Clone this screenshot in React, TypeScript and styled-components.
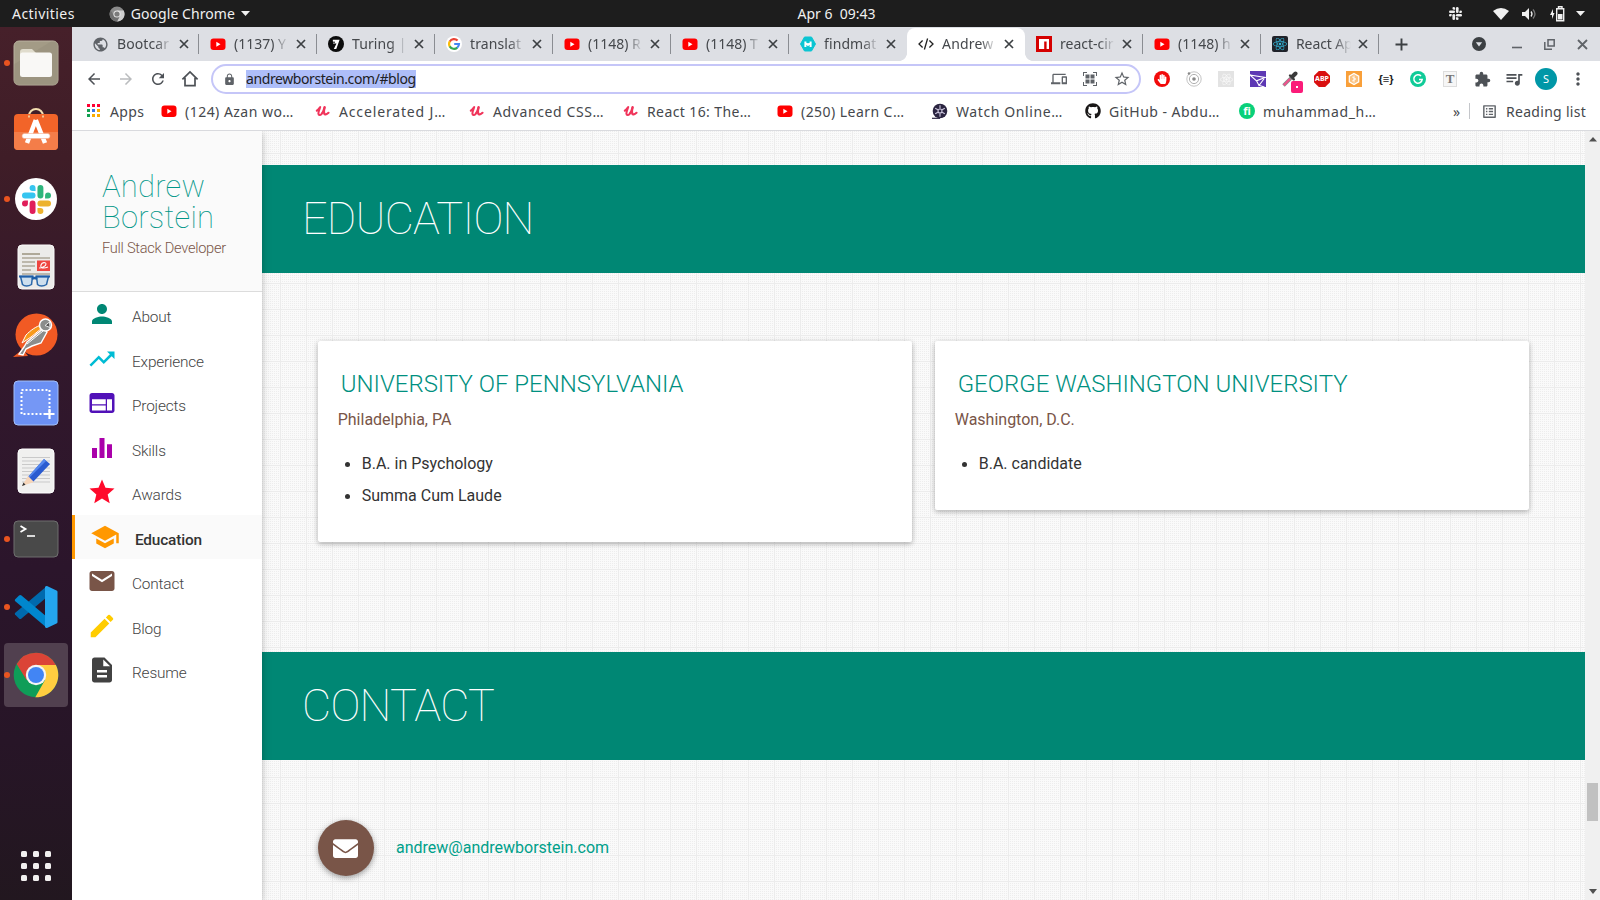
import React from 'react';
import styled, { createGlobalStyle, css } from 'styled-components';
import {
  MdPerson, MdTrendingUp, MdWeb, MdEqualizer, MdGrade, MdSchool, MdMail, MdEdit, MdDescription,
  MdArrowBack, MdArrowForward, MdRefresh, MdLock, MdDevices, MdStarBorder, MdExtension,
  MdQueueMusic, MdMoreVert, MdPublic, MdOutlineListAlt,
} from 'react-icons/md';
import { FaGithub, FaReact, FaEnvelope, FaHandPaper } from 'react-icons/fa';

const GlobalStyle = createGlobalStyle`
  * { box-sizing: border-box; }
  body { margin: 0; overflow: hidden; background: #fff; }
  svg { display: block; flex: none; }
`;

const uiFont = css`font-family: 'Noto Sans', 'Open Sans', sans-serif;`;
const siteFont = css`font-family: Roboto, 'Liberation Sans', sans-serif;`;

const Desktop = styled.div`
  width: 1600px;
  height: 900px;
  display: flex;
  flex-direction: column;
  overflow: hidden;
`;

/* ---------- system bar ---------- */

const SystemBar = styled.header`
  ${uiFont}
  height: 27px;
  flex: none;
  background: #1d1d1d;
  color: #f0f0f0;
  display: grid;
  grid-template-columns: 1fr auto 1fr;
  align-items: center;
  font-size: 14px;
  line-height: 27px;
  white-space: pre;
`;
const SystemLeft = styled.div`
  display: flex;
  align-items: center;
  padding-left: 12px;
`;
const SystemApp = styled.div`
  display: flex;
  align-items: center;
  margin-left: 34px;
  gap: 6px;
`;
const SystemRight = styled.div`
  display: flex;
  align-items: center;
  justify-content: flex-end;
  padding-right: 15px;
`;
const Clock = styled.div`
  padding-left: 73px;
`;
const Label = styled.span<{ $ls?: number }>`
  letter-spacing: ${(p) => p.$ls ?? 0}px;
  white-space: pre;
`;
const Spacer = styled.span<{ $w: number }>`
  width: ${(p) => p.$w}px;
  flex: none;
`;

const Main = styled.div`
  flex: 1;
  display: flex;
  min-height: 0;
`;

/* ---------- dock ---------- */

const Dock = styled.nav`
  width: 72px;
  flex: none;
  background: linear-gradient(180deg, #46202a 0%, #3f1d27 15%, #32182c 38%, #2b152b 62%, #271527 82%, #22171f 100%);
  display: flex;
  flex-direction: column;
  padding-top: 2px;
`;
const DockItem = styled.div<{ $open?: boolean; $active?: boolean }>`
  position: relative;
  height: 64px;
  width: 64px;
  margin: 2px 4px;
  flex: none;
  border-radius: 4px;
  display: flex;
  align-items: center;
  justify-content: center;
  background: ${(p) => (p.$active ? '#51404f' : 'transparent')};
  ${(p) => p.$open && css`
    &::before {
      content: '';
      position: absolute;
      left: 0;
      top: 29px;
      width: 6px;
      height: 6px;
      border-radius: 50%;
      background: #e95420;
    }
  `}
`;
const AppGrid = styled.div`
  margin: auto 0 19px 21px;
  display: grid;
  grid-template-columns: repeat(3, 6px);
  gap: 6px;
  span {
    width: 6px;
    height: 6px;
    border-radius: 1.5px;
    background: #f2f0f0;
  }
`;

/* ---------- browser ---------- */

const Browser = styled.div`
  flex: 1;
  min-width: 0;
  display: flex;
  flex-direction: column;
`;
const TabStrip = styled.div`
  ${uiFont}
  height: 34px;
  flex: none;
  background: #dddfe4;
  display: flex;
  align-items: center;
  padding-left: 9px;
  font-size: 14px;
  color: #45484c;
`;
const TabBox = styled.div<{ $active?: boolean; $sep?: boolean }>`
  position: relative;
  width: 118px;
  height: 34px;
  flex: none;
  display: flex;
  align-items: center;
  padding: 0 8px 0 11px;
  ${(p) => p.$active && css`
    margin-top: 1px;
    height: 33px;
    background: #fff;
    border-radius: 8px 8px 0 0;
    padding-bottom: 1px;
    &::before, &::after {
      content: '';
      position: absolute;
      bottom: 0;
      width: 8px;
      height: 8px;
    }
    &::before { left: -8px; background: radial-gradient(circle at 0 0, transparent 7.6px, #fff 8.2px); }
    &::after { right: -8px; background: radial-gradient(circle at 100% 0, transparent 7.6px, #fff 8.2px); }
  `}
  ${(p) => p.$sep && css`
    &::after {
      content: '';
      position: absolute;
      right: 0;
      top: 7px;
      width: 1px;
      height: 20px;
      background: #8a8d92;
    }
  `}
`;
const TabTitle = styled.div<{ $ls: number }>`
  margin-left: 8px;
  width: 55px;
  overflow: hidden;
  white-space: nowrap;
  line-height: 24px;
  letter-spacing: ${(p) => p.$ls}px;
  -webkit-mask-image: linear-gradient(90deg, #000 70%, transparent 100%);
  mask-image: linear-gradient(90deg, #000 70%, transparent 100%);
`;
const CloseGlyph = styled.svg`
  margin-left: 7px;
  color: #3c4043;
`;
const WindowButtons = styled.div`
  flex: 1;
  display: flex;
  align-items: center;
  justify-content: flex-end;
  padding-right: 12px;
`;

const Toolbar = styled.div`
  height: 36px;
  flex: none;
  background: #fff;
  display: flex;
  align-items: center;
  color: #4d5156;
  padding: 0 6px 0 13px;
`;
const NavButtons = styled.div`
  display: flex;
  align-items: center;
  gap: 14px;
  margin-right: 12px;
`;
const Omnibox = styled.div`
  ${uiFont}
  width: 930px;
  height: 30px;
  flex: none;
  border: 2px solid #c5c6f8;
  border-radius: 15px;
  display: flex;
  align-items: center;
  padding: 0 8px 0 10px;
  font-size: 14px;
  color: #202124;
`;
const Selected = styled.span`
  margin-left: 10px;
  background: #aebef9;
  line-height: 18px;
  width: 170px;
  letter-spacing: -0.41px;
  white-space: nowrap;
`;
const OmniIcons = styled.div`
  margin-left: auto;
  display: flex;
  align-items: center;
  gap: 16px;
`;
const Extensions = styled.div`
  margin-left: auto;
  display: flex;
  align-items: center;
`;
const ExtSlot = styled.div`
  position: relative;
  width: 32px;
  height: 32px;
  display: flex;
  align-items: center;
  justify-content: center;
`;
const Avatar = styled.div`
  ${uiFont}
  width: 22px;
  height: 22px;
  border-radius: 50%;
  background: #0097a7;
  color: #fff;
  font-size: 11px;
  line-height: 22px;
  text-align: center;
`;

const BookmarkBar = styled.div`
  ${uiFont}
  height: 34px;
  flex: none;
  background: #fff;
  border-bottom: 1px solid #d9dade;
  display: flex;
  align-items: center;
  padding: 0 14px 5px 15px;
  font-size: 14px;
  color: #45484c;
`;
const Bookmark = styled.div`
  width: 154px;
  flex: none;
  display: flex;
  align-items: center;
  gap: 8px;
`;
const AppsLink = styled.div`
  width: 74px;
  flex: none;
  display: flex;
  align-items: center;
  gap: 9px;
`;
const ReadingArea = styled.div`
  margin-left: auto;
  display: flex;
  align-items: center;
`;
const Divider = styled.span`
  width: 1px;
  height: 16px;
  background: #c4c6ca;
  margin: 0 11px 0 9px;
`;

/* ---------- site ---------- */

const Viewport = styled.div`
  flex: 1;
  min-height: 0;
  display: flex;
`;
const SideNav = styled.aside`
  ${siteFont}
  position: relative;
  z-index: 2;
  width: 190px;
  flex: none;
  background: #fff;
  box-shadow: 0 2px 5px rgba(0, 0, 0, 0.16), 0 2px 10px rgba(0, 0, 0, 0.12);
  clip-path: inset(0 -14px 0 0);
`;
const Brand = styled.div`
  height: 161px;
  background: #fafafa;
  border-bottom: 1px solid #dcdcdc;
  padding: 40px 0 0 30px;
`;
const BrandName = styled.div`
  font-weight: 100;
  font-size: 31px;
  line-height: 31px;
  letter-spacing: 0.25px;
  color: #009688;
`;
const BrandRole = styled.div`
  font-weight: 300;
  font-size: 14.6px;
  line-height: 20px;
  letter-spacing: -0.26px;
  margin-top: 5px;
  color: #795548;
  white-space: nowrap;
`;
const SideLink = styled.div<{ $active?: boolean; $color: string }>`
  height: 44.5px;
  display: flex;
  align-items: center;
  padding-left: 15px;
  font-size: 15.4px;
  letter-spacing: -0.18px;
  font-weight: ${(p) => (p.$active ? 500 : 300)};
  color: ${(p) => (p.$active ? '#333' : '#444')};
  background: ${(p) => (p.$active ? '#fafafa' : 'transparent')};
  border-left: ${(p) => (p.$active ? `3px solid ${p.$color}` : '0')};
  svg {
    width: 30px;
    height: 30px;
    color: ${(p) => p.$color};
  }
  span {
    margin-left: 15px;
    padding-top: 6px;
  }
`;
const Page = styled.main`
  ${siteFont}
  flex: 1;
  min-width: 0;
  padding-top: 34px;
  background-color: #fafafa;
  background-image:
    linear-gradient(90deg, #ececec 1px, transparent 1px),
    linear-gradient(180deg, #ececec 1px, transparent 1px),
    conic-gradient(from 0deg at 1px 1px, transparent 75%, #ededed 0);
  background-size: 26px 26px, 26px 26px, 2px 2px;
  background-position: 18px 22px, 18px 22px, 0 0;
`;
const Banner = styled.h2`
  margin: 0;
  height: 108px;
  padding: 27px 0 0 40px;
  background: #008774;
  color: #fff;
  font-weight: 100;
  font-size: 45px;
  line-height: 53px;
  letter-spacing: -0.78px;
`;
const CardRow = styled.div`
  height: 379px;
  padding: 68px 56px 0 56px;
  display: flex;
  align-items: flex-start;
  gap: 23px;
`;
const Card = styled.article`
  flex: 1;
  background: #fff;
  border-radius: 2px;
  box-shadow: 0 2px 5px rgba(0, 0, 0, 0.2), 0 1px 6px rgba(0, 0, 0, 0.12);
  padding: 28px 20px 30px 19.7px;
`;
const CardTitle = styled.h3`
  margin: 0 0 0 3px;
  font-weight: 300;
  font-size: 24px;
  line-height: 30px;
  color: #009080;
  white-space: nowrap;
`;
const CardPlace = styled.p`
  margin: 9px 0 0;
  font-size: 16px;
  line-height: 24px;
  color: #795548;
`;
const CardList = styled.ul`
  margin: 16px 0 0;
  padding: 0 0 0 24px;
  list-style: none;
  color: #333;
  font-size: 16px;
  line-height: 32px;
  li {
    display: flex;
    align-items: center;
  }
  li::before {
    content: '';
    width: 5px;
    height: 5px;
    margin: 0 12px 0 -17px;
    border-radius: 50%;
    background: #333;
  }
`;
const ContactRow = styled.div`
  padding: 60px 0 0 56px;
  display: flex;
  align-items: center;
  gap: 22px;
`;
const MailButton = styled.div`
  width: 56px;
  height: 56px;
  border-radius: 50%;
  background: #795548;
  color: #fff;
  display: flex;
  align-items: center;
  justify-content: center;
  padding-right: 2px;
  box-shadow: 0 2px 5px rgba(0, 0, 0, 0.26), 0 2px 8px rgba(0, 0, 0, 0.14);
`;
const MailLink = styled.a`
  color: #00a08a;
  font-size: 16px;
  padding-bottom: 2px;
`;
const ScrollTrack = styled.div`
  width: 15px;
  flex: none;
  background: #f0f0f0;
  display: flex;
  flex-direction: column;
  align-items: center;
  padding: 6px 0;
`;
const Thumb = styled.div`
  width: 11px;
  height: 38px;
  background: #c1c1c1;
  margin: 641px 0 auto;
`;

/* ---------- favicons and glyphs ---------- */

const YouTube = () => (
  <svg width="16" height="16" viewBox="0 0 16 16">
    <rect x="0.5" y="2.5" width="15" height="11.5" rx="3" fill="#f00" />
    <path d="M6.3 5.7v5l4.2-2.5z" fill="#fff" />
  </svg>
);
const Turing = () => (
  <svg width="16" height="16" viewBox="0 0 16 16">
    <circle cx="8" cy="8" r="8" fill="#0c0c0c" />
    <path d="M4.8 3.8h6.8L8.3 13H5.8l2.7-5.4H5z" fill="#fff" />
    <path d="M4 6.2h3" stroke="#0c0c0c" strokeWidth="1" />
  </svg>
);
const Google = () => (
  <svg width="16" height="16" viewBox="0 0 16 16">
    <circle cx="8" cy="8" r="8" fill="#fff" />
    <g fill="none" strokeWidth="2.1">
      <path d="M11.6 4.6A5 5 0 0 0 3.7 5.6" stroke="#ea4335" />
      <path d="M3.8 5.4a5 5 0 0 0 0 5.2" stroke="#fbbc05" />
      <path d="M3.7 10.4a5 5 0 0 0 7.6 1.2" stroke="#34a853" />
      <path d="M11.2 11.7A5 5 0 0 0 13 8H8.2" stroke="#4285f4" />
    </g>
  </svg>
);
const FindMatch = () => (
  <svg width="16" height="16" viewBox="0 0 16 16">
    <path d="M4.5 1h7L15.5 8l-4 7h-7L.5 8z" fill="#0cc5d2" stroke="#0cc5d2" strokeLinejoin="round" />
    <path d="M5.4 11V5.6M10.6 11V5.6M5.4 6.6L8 9l2.6-2.4" fill="none" stroke="#fff" strokeWidth="2" />
  </svg>
);
const Code = () => (
  <svg width="16" height="16" viewBox="0 0 16 16" fill="none" stroke="#222" strokeWidth="1.3">
    <path d="M4.6 4.5L1 8l3.6 3.5M11.4 4.5L15 8l-3.6 3.5M9.6 2.5L6.4 13.5" />
  </svg>
);
const Npm = () => (
  <svg width="16" height="16" viewBox="0 0 16 16">
    <rect width="16" height="16" fill="#d50000" />
    <path d="M3 3h10v10h-2.4V5.6H8.2V13H3z" fill="#fff" />
  </svg>
);
const ReactFav = styled.span`
  width: 16px;
  height: 16px;
  flex: none;
  border-radius: 2px;
  background: #20232a;
  color: #33b5d8;
  display: flex;
  align-items: center;
  justify-content: center;
`;
const Udemy = () => (
  <svg width="16" height="16" viewBox="0 0 16 16" fill="none" stroke="#f0355b" strokeLinecap="round" strokeLinejoin="round">
    <path d="M1.8 7.6C3 6.8 4.2 5.4 5.2 4c-1 2.7-2 5-1.8 6.7.2 1.8 2 1.6 3.1.4C7.8 9.8 8.8 7 9.6 4.2" strokeWidth="2.1" />
    <path d="M9.6 4.2C8.9 7 8.7 9 9.2 10.6c.5 1.3 2.2 1.2 4.300-.8" strokeWidth="2.2" />
  </svg>
);
const Reel = () => (
  <svg width="17" height="16" viewBox="0 0 17 16">
    <circle cx="9" cy="8" r="7.3" fill="#2a2440" />
    <g stroke="#cfc9e0" strokeWidth="1.1">
      <path d="M9 2.200v3.300M13.800 5.200l-2.700 1.500M13.800 10.800l-2.700-1.500M9 13.800v-3.300M4.200 10.800l2.700-1.500M4.200 5.200l2.700 1.500" />
      <circle cx="9" cy="8" r="2" fill="#2a2440" />
    </g>
    <path d="M1 15.3h8" stroke="#2a2440" strokeWidth="1.2" />
  </svg>
);
const FiverrBadge = styled.span`
  width: 16px;
  height: 16px;
  flex: none;
  border-radius: 50%;
  background: #09d07a;
  color: #fff;
  font-size: 11px;
  font-weight: 700;
  line-height: 15px;
  text-align: center;
`;
const AppsGlyph = () => {
  const c = ['#f03', '#f03', '#f03', '#10a050', '#3b78e7', '#f9ab00', '#10a050', '#f9ab00', '#f9ab00'];
  return (
    <svg width="14" height="14" viewBox="0 0 14 14">
      {c.map((f, i) => (
        <rect key={i} x={(i % 3) * 5} y={Math.floor(i / 3) * 5} width="3" height="3" fill={f} />
      ))}
    </svg>
  );
};
const HomeGlyph = () => (
  <svg width="18" height="18" viewBox="0 0 18 18" fill="none" stroke="currentColor" strokeWidth="1.7">
    <path d="M1.4 9.4L9 2l7.6 7.4M4 7.700v8h10v-8" />
  </svg>
);
const SlackMark = ({ size, mono }: { size: number; mono?: boolean }) => {
  const c = mono ? ['#eee', '#eee', '#eee', '#eee'] : ['#36c5f0', '#2eb67d', '#ecb22e', '#e01e5a'];
  return (
    <svg width={size} height={size} viewBox="0 0 24 24">
      {c.map((f, i) => (
        <g key={i} fill={f} transform={`rotate(${i * 90} 12 12)`}>
          <rect x="0" y="6.3" width="11.2" height="4.9" rx="2.45" />
          <path d="M11.2 2.45a2.45 2.45 0 1 0-2.45 2.45h2.45z" />
        </g>
      ))}
    </svg>
  );
};
const MonoChrome = () => (
  <svg width="16" height="16" viewBox="0 0 16 16">
    <circle cx="8" cy="8" r="7.5" fill="#8b8b8b" />
    <path d="M8 4.5h6.7A7.5 7.5 0 0 1 8 15.5l3-5.7z" fill="#cfcfcf" />
    <path d="M1.6 4.3A7.5 7.5 0 0 0 8 15.5l3-5.7-6 0z" fill="#707070" />
    <circle cx="8" cy="8" r="3.6" fill="#e8e8e8" />
    <circle cx="8" cy="8" r="2.6" fill="#7b7b7b" />
  </svg>
);
const Caret = ({ w = 9, h = 5, color = '#f0f0f0' }: { w?: number; h?: number; color?: string }) => (
  <svg width={w} height={h} viewBox="0 0 10 6" preserveAspectRatio="none"><path d="M0 0h10L5 6z" fill={color} /></svg>
);

/* ---------- dock pictures ---------- */

const FilesIcon = () => (
  <svg width="46" height="46" viewBox="0 0 46 46">
    <rect x="1" y="1" width="44" height="44" rx="5" fill="#a39b86" stroke="#b9b29f" />
    <path d="M1.5 24L38 1.5h3a4 4 0 0 1 4 4V41a4 4 0 0 1-4 4H5a4 4 0 0 1-4-4z" fill="#968e79" opacity=".5" />
    <path d="M7 12a3 3 0 0 1 3-3h9l4 4h13v8H7z" fill="#e0dccd" />
    <rect x="7" y="12.5" width="32" height="24.5" rx="2.5" fill="#f9f8f6" />
  </svg>
);
const SoftwareIcon = () => (
  <svg width="46" height="50" viewBox="0 0 46 50">
    <path d="M16 10a7 7 0 0 1 14 0" fill="none" stroke="#f3dfb0" strokeWidth="2" />
    <rect x="1" y="8" width="44" height="36" rx="4" fill="#f26429" />
    <path d="M1 26h44v14a4 4 0 0 1-4 4H5a4 4 0 0 1-4-4z" fill="#f47d49" />
    <path d="M22.8 14L14 37M22.8 14L32 37" stroke="#fff" strokeWidth="4.5" />
    <rect x="9" y="27.5" width="28" height="5" rx="2.5" fill="#fff" stroke="#f3a98a" strokeWidth=".6" />
    <path d="M16 9.5v2M30 9.5v2" stroke="#f3dfb0" strokeWidth="1.6" />
  </svg>
);
const SlackDock = styled.div`
  width: 42px;
  height: 42px;
  border-radius: 50%;
  background: #fff;
  display: flex;
  align-items: center;
  justify-content: center;
`;
const ViewerIcon = () => (
  <svg width="46" height="46" viewBox="0 0 46 46">
    <rect x="5" y="1" width="36" height="44" rx="4" fill="#ecebe9" stroke="#fafafa" />
    <path d="M9 14h28M9 18h13M9 22h13M9 26h9M9 30h28" stroke="#bdb8ac" strokeWidth="1.8" />
    <path d="M9 10h18" stroke="#a9a290" strokeWidth="1.8" />
    <rect x="24" y="16.5" width="13" height="10.5" fill="#ee4540" />
    <path d="M26 24c3 0 7-2 7-4s-4-2-5 1 2 4 7 2" fill="none" stroke="#fff" strokeWidth="1.1" />
    <path d="M7.5 32.5h12l-1 8c-3 2-7 2-9 0zM23.5 32.5h12l-2 8c-3 2-7 2-9 0z" fill="#cddfee" stroke="#2a68aa" strokeWidth="1.5" />
    <path d="M6 32.5h14.5M22.5 32.5h14.5M19 35q2.5-2 5 0" fill="none" stroke="#1f5fa8" strokeWidth="2.2" />
  </svg>
);
const PostmanIcon = () => (
  <svg width="46" height="46" viewBox="0 0 46 46">
    <path d="M0 45l10-8 5 7z" fill="#f15a24" />
    <circle cx="23.5" cy="22.5" r="21" fill="#f15a24" />
    <path d="M31 16L14 30l-3 5-5 7 4 1 3-6 6-3 9-3 6-11z" fill="#8b8d8c" stroke="#fff" strokeWidth="1.4" />
    <path d="M29 13c-6 1-12 6-16 10l-4 8 9-6 11-9z" fill="#f89a1c" stroke="#fff" strokeWidth="1" />
    <path d="M14 32l16-13" stroke="#fff" strokeWidth="1" />
    <circle cx="32.5" cy="13" r="6" fill="#8b8d8c" stroke="#fff" strokeWidth="1.5" />
    <path d="M32 13.5l4.5-3.5.5 5.5z" fill="#555" stroke="#fff" strokeWidth=".8" />
  </svg>
);
const ScreenshotIcon = () => (
  <svg width="46" height="46" viewBox="0 0 46 46">
    <rect x="1" y="1" width="44" height="44" rx="4" fill="#6b90f4" stroke="#a4c0f8" />
    <rect x="8.5" y="10" width="28" height="24" fill="#7597f5" stroke="#fff" strokeWidth="2" strokeDasharray="2 2" />
    <path d="M36.5 29v10M31.5 34h10" stroke="#fff" strokeWidth="2.2" />
  </svg>
);
const EditorIcon = () => (
  <svg width="46" height="46" viewBox="0 0 46 46">
    <rect x="5" y="1" width="36" height="44" rx="4" fill="#f0f0ef" stroke="#fff" />
    <path d="M9 9.5h28M9 13h28M9 16.5h28M9 20h28M9 23.5h28M9 27h28M9 30.5h28M9 34h28" stroke="#c9c9c9" />
    <path d="M31 11l6 5-17 18-5-5z" fill="#2a5bd0" />
    <path d="M31 11l2 2-17 17-1-1z" fill="#5487ee" />
    <path d="M15 28l6 6-12 4z" fill="#f6d5b9" />
    <path d="M10.5 34.5L9 38l3.5-1.2z" fill="#333" />
  </svg>
);
const TerminalIcon = () => (
  <svg width="46" height="46" viewBox="0 0 46 46">
    <rect x="1" y="5" width="44" height="36" rx="4" fill="#494949" stroke="#6f6f6f" />
    <path d="M7.5 10l5 3-5 3" fill="none" stroke="#fff" strokeWidth="1.8" />
    <path d="M14 20h8" stroke="#fff" strokeWidth="1.6" />
  </svg>
);
const CodeIcon = () => (
  <svg width="44" height="44" viewBox="0 0 44 44">
    <path d="M1 29.5l4 4a2 2 0 0 0 2.5 0L33 12V1L1 28a1.5 1.5 0 0 0 0 1.5z" fill="#0069ad" />
    <path d="M1 14.5l4-4a2 2 0 0 1 2.5 0L33 32v11L1 16a1.5 1.5 0 0 1 0-1.5z" fill="#0087ce" />
    <path d="M33 43V1l9.5 4.5a1.5 1.5 0 0 1 1 1.5v30a1.5 1.5 0 0 1-1 1.5z" fill="#24a6ef" />
    <path d="M33 43a2 2 0 0 1-2-1V2a2 2 0 0 1 2-1z" fill="#24a6ef" />
  </svg>
);
const ChromeIcon = () => (
  <svg width="46" height="46" viewBox="0 0 46 46">
    <circle cx="23" cy="23" r="22.3" fill="#0f9d58" />
    <path d="M23 .7a22.3 22.3 0 0 0-19.3 11.2L13.5 28 23 13h19.9A22.3 22.3 0 0 0 23 .7z" fill="#db4437" />
    <path d="M42.9 13H23l9 15-9.7 17.3A22.3 22.3 0 0 0 42.9 13z" fill="#ffcd40" />
    <circle cx="23" cy="23" r="10.2" fill="#f4f4f4" />
    <circle cx="23" cy="23" r="8" fill="#4285f4" />
  </svg>
);

/* ---------- extension pictures ---------- */

const RedDot = styled.span`
  width: 16px;
  height: 16px;
  border-radius: 50%;
  background: #f20a0a;
  color: #fff;
  display: flex;
  align-items: center;
  justify-content: center;
`;
const AbpBadge = styled.span`
  ${uiFont}
  width: 16px;
  height: 16px;
  background: #d90f0f;
  clip-path: polygon(30% 0, 70% 0, 100% 30%, 100% 70%, 70% 100%, 30% 100%, 0 70%, 0 30%);
  color: #fff;
  font-size: 7px;
  font-weight: 700;
  line-height: 16px;
  text-align: center;
`;
const PaleReact = styled.span`
  width: 16px;
  height: 16px;
  background: #e3e3e3;
  color: #fafafa;
  display: flex;
  align-items: center;
  justify-content: center;
`;
const Braces = styled.span`
  font: 700 11px 'Liberation Sans', sans-serif;
  color: #222;
`;
const TypeBox = styled.span`
  width: 14px;
  height: 16px;
  border: 1px solid #ddd;
  background: #f6f6f6;
  font: 700 13px/14px 'Liberation Serif', serif;
  text-align: center;
  color: #777;
`;
const PickerBadge = styled.span`
  position: absolute;
  left: 17px;
  top: 18px;
  width: 12px;
  height: 12px;
  border-radius: 2px;
  background: #fb1b79;
  &::after {
    content: '';
    position: absolute;
    left: 5px;
    top: 5px;
    width: 2px;
    height: 2px;
    background: #fff;
  }
`;
const Orbit = () => (
  <svg width="16" height="16" viewBox="0 0 16 16" fill="none" stroke="#c4c4c4">
    <circle cx="8" cy="8" r="7.2" /><circle cx="8" cy="8" r="4.6" stroke="#b0b0b0" />
    <circle cx="8" cy="8" r="1.8" fill="#888" stroke="none" /><circle cx="3" cy="2.5" r="1.3" fill="#888" stroke="none" />
  </svg>
);
const Arrowed = () => (
  <svg width="16" height="16" viewBox="0 0 16 16">
    <rect width="16" height="16" fill="#5d38b4" />
    <path d="M0 4l15 2.5-8.5 3.3zM6.5 9.8L9 14.5l6-8M9.5 14.5l5 1.5" fill="none" stroke="#fff" strokeWidth="1.1" />
  </svg>
);
const Picker = () => (
  <svg width="16" height="16" viewBox="0 0 16 16">
    <path d="M1.5 14.5L9 7" stroke="#8a8a8a" strokeWidth="3.6" />
    <path d="M1.8 14.2L8 8" stroke="#f2508c" strokeWidth="2" />
    <path d="M8 4.5l3.8 3.8" stroke="#3a3a3a" strokeWidth="2.4" strokeLinecap="round" />
    <path d="M10.5 5.5L13.5 2.5" stroke="#3a3a3a" strokeWidth="4" strokeLinecap="round" />
  </svg>
);
const HexBox = () => (
  <svg width="16" height="16" viewBox="0 0 16 16">
    <rect width="16" height="16" fill="#f9a03a" />
    <path d="M8 2.5l4.700 2.700v5.600L8 13.500l-4.700-2.700V5.200z" fill="#fbc27f" stroke="#fff" strokeWidth="1.200" />
    <path d="M8 4.500v7M6.200 6l3.600 2-3.600 2" stroke="#fff" fill="none" strokeWidth=".9" />
  </svg>
);
const Grammarly = () => (
  <svg width="16" height="16" viewBox="0 0 16 16">
    <circle cx="8" cy="8" r="8" fill="#10cb98" />
    <path d="M11 5a4.2 4.2 0 1 0 1.2 3.4H9" fill="none" stroke="#fff" strokeWidth="1.5" />
  </svg>
);
const Scanner = () => (
  <svg width="14" height="14" viewBox="0 0 14 14" fill="#5f6368">
    <path d="M0 4V0h4v1H1v3zM10 0h4v4h-1V1h-3zM0 10h1v3h3v1H0zM13 10h1v4h-4v-1h3z" />
    <rect x="2.5" y="2.5" width="4" height="4" /><rect x="7.5" y="2.5" width="4" height="4" />
    <rect x="2.5" y="7.5" width="4" height="4" /><rect x="7.5" y="7.5" width="4" height="4" />
  </svg>
);

const tabs: { icon: React.ReactNode; title: string; active?: boolean; ls?: number }[] = [
  { icon: <MdPublic size={17} color="#5f6368" />, title: 'Bootcar', ls: 0.1 },
  { icon: <YouTube />, title: '(1137) Y' },
  { icon: <Turing />, title: 'Turing |', ls: 0.1 },
  { icon: <Google />, title: 'translat', ls: 0.1 },
  { icon: <YouTube />, title: '(1148) R' },
  { icon: <YouTube />, title: '(1148) T' },
  { icon: <FindMatch />, title: 'findmat', ls: 0.1 },
  { icon: <Code />, title: 'Andrew', ls: 0.2, active: true },
  { icon: <Npm />, title: 'react-cir', ls: 0 },
  { icon: <YouTube />, title: '(1148) h' },
  { icon: <ReactFav><FaReact size={14} /></ReactFav>, title: 'React Ap', ls: -0.1 },
];

const bookmarks: { icon: React.ReactNode; title: string; ls: number }[] = [
  { icon: <YouTube />, title: '(124) Azan wo…', ls: 0.47 },
  { icon: <Udemy />, title: 'Accelerated J…', ls: 0.85 },
  { icon: <Udemy />, title: 'Advanced CSS…', ls: 0.6 },
  { icon: <Udemy />, title: 'React 16: The…', ls: 0.4 },
  { icon: <YouTube />, title: '(250) Learn C…', ls: 0.45 },
  { icon: <Reel />, title: 'Watch Online…', ls: 0.6 },
  { icon: <FaGithub size={16} color="#191717" />, title: 'GitHub - Abdu…', ls: 0.48 },
  { icon: <FiverrBadge>fi</FiverrBadge>, title: 'muhammad_h…', ls: 0.6 },
];

const links = [
  { icon: <MdPerson />, label: 'About', color: '#008774' },
  { icon: <MdTrendingUp />, label: 'Experience', color: '#00bcd4' },
  { icon: <MdWeb />, label: 'Projects', color: '#5111b8' },
  { icon: <MdEqualizer />, label: 'Skills', color: '#aa00aa' },
  { icon: <MdGrade />, label: 'Awards', color: '#ff0a2b' },
  { icon: <MdSchool />, label: 'Education', color: '#ff9800', active: true },
  { icon: <MdMail />, label: 'Contact', color: '#795548' },
  { icon: <MdEdit />, label: 'Blog', color: '#ffcc00' },
  { icon: <MdDescription />, label: 'Resume', color: '#424242' },
];

const schools = [
  { name: 'UNIVERSITY OF PENNSYLVANIA', place: 'Philadelphia, PA', items: ['B.A. in Psychology', 'Summa Cum Laude'] },
  { name: 'GEORGE WASHINGTON UNIVERSITY', place: 'Washington, D.C.', items: ['B.A. candidate'] },
];

const extensions: React.ReactNode[] = [
  <RedDot><FaHandPaper size={10} /></RedDot>,
  <Orbit />,
  <PaleReact><FaReact size={13} /></PaleReact>,
  <Arrowed />,
  <><Picker /><PickerBadge /></>,
  <AbpBadge>ABP</AbpBadge>,
  <HexBox />,
  <Braces>{'{≡}'}</Braces>,
  <Grammarly />,
  <TypeBox>T</TypeBox>,
  <MdExtension size={17} />,
  <MdQueueMusic size={20} />,
  <Avatar>S</Avatar>,
  <MdMoreVert size={20} />,
];

export default function App() {
  return (
    <Desktop>
      <GlobalStyle />
      <SystemBar>
        <SystemLeft>
          <Label $ls={0.45}>Activities</Label>
          <SystemApp>
            <MonoChrome />
            <Label $ls={0.05}>Google Chrome</Label>
            <Caret />
          </SystemApp>
        </SystemLeft>
        <Clock>Apr 6  09:43</Clock>
        <SystemRight>
          <SlackMark size={13} mono />
          <Spacer $w={31} />
          <svg width="16" height="12" viewBox="0 0 16 12"><path d="M0 3Q8-3 16 3L8 12z" fill="#f0f0f0" /></svg>
          <Spacer $w={13} />
          <svg width="15" height="12" viewBox="0 0 15 12">
            <path d="M0 4h3l4-4v12L3 8H0z" fill="#f0f0f0" />
            <path d="M9 3.5q2 2.5 0 5" fill="none" stroke="#f0f0f0" strokeWidth="1.3" />
            <path d="M11 1.5q4 4.5 0 9" fill="none" stroke="#777" strokeWidth="1.3" />
          </svg>
          <Spacer $w={13} />
          <svg width="15" height="16" viewBox="0 0 15 16">
            <path d="M3 3L0 9h2v4l2.5-6H3z" fill="#f0f0f0" />
            <path d="M6.7 2.7h7v12h-7zM8.5.8h3.5v2H8.5z" fill="none" stroke="#f0f0f0" strokeWidth="1.4" />
            <path d="M8 8h4.5v5.5H8z" fill="#f0f0f0" />
          </svg>
          <Spacer $w={11} />
          <Caret />
        </SystemRight>
      </SystemBar>
      <Main>
        <Dock>
          <DockItem $open><FilesIcon /></DockItem>
          <DockItem><SoftwareIcon /></DockItem>
          <DockItem $open><SlackDock><SlackMark size={29} /></SlackDock></DockItem>
          <DockItem><ViewerIcon /></DockItem>
          <DockItem><PostmanIcon /></DockItem>
          <DockItem><ScreenshotIcon /></DockItem>
          <DockItem><EditorIcon /></DockItem>
          <DockItem $open><TerminalIcon /></DockItem>
          <DockItem $open><CodeIcon /></DockItem>
          <DockItem $open $active><ChromeIcon /></DockItem>
          <AppGrid>{Array.from({ length: 9 }, (_, i) => <span key={i} />)}</AppGrid>
        </Dock>
        <Browser>
          <TabStrip>
            {tabs.map((t, i) => (
              <TabBox key={i} $active={t.active} $sep={!t.active && i !== 6}>
                {t.icon}
                <TabTitle $ls={t.ls ?? 0}>{t.title}</TabTitle>
                <CloseGlyph width="10" height="10" viewBox="0 0 10 10">
                  <path d="M1 1l8 8M9 1L1 9" stroke="currentColor" strokeWidth="1.700" />
                </CloseGlyph>
              </TabBox>
            ))}
            <Spacer $w={16} />
            <svg width="13" height="13" viewBox="0 0 13 13"><path d="M6.500.5v12M.5 6.500h12" stroke="#3c4043" strokeWidth="1.900" /></svg>
            <WindowButtons>
              <svg width="14" height="14" viewBox="0 0 14 14"><circle cx="7" cy="7" r="7" fill="#3c4043" /><path d="M3.8 5.2h6.4L7 9.6z" fill="#dddfe4" /></svg>
              <Spacer $w={26} />
              <svg width="10" height="12" viewBox="0 0 10 12"><path d="M0 9.5h10" stroke="#5f6368" strokeWidth="1.6" /></svg>
              <Spacer $w={22} />
              <svg width="11" height="11" viewBox="0 0 11 11" fill="none" stroke="#5f6368" strokeWidth="1.5"><path d="M4 .8h6.2V7H4zM.8 3v7.2H8" /></svg>
              <Spacer $w={22} />
              <svg width="11" height="11" viewBox="0 0 11 11"><path d="M1 1l9 9M10 1l-9 9" stroke="#5f6368" strokeWidth="1.8" /></svg>
            </WindowButtons>
          </TabStrip>
          <Toolbar>
            <NavButtons>
              <MdArrowBack size={18} />
              <MdArrowForward size={18} color="#babcbe" />
              <MdRefresh size={18} />
              <HomeGlyph />
            </NavButtons>
            <Omnibox>
              <MdLock size={13} color="#5f6368" />
              <Selected>andrewborstein.com/#blog</Selected>
              <OmniIcons>
                <MdDevices size={16} color="#5f6368" />
                <Scanner />
                <MdStarBorder size={18} color="#5f6368" />
              </OmniIcons>
            </Omnibox>
            <Extensions>
              {extensions.map((e, i) => <ExtSlot key={i}>{e}</ExtSlot>)}
            </Extensions>
          </Toolbar>
          <BookmarkBar>
            <AppsLink><AppsGlyph /><Label $ls={0.4}>Apps</Label></AppsLink>
            {bookmarks.map((b, i) => (
              <Bookmark key={i}>{b.icon}<Label $ls={b.ls}>{b.title}</Label></Bookmark>
            ))}
            <ReadingArea>
              <Label>»</Label>
              <Divider />
              <MdOutlineListAlt size={17} color="#5f6368" />
              <Spacer $w={8} />
              <Label $ls={0.28}>Reading list</Label>
            </ReadingArea>
          </BookmarkBar>
          <Viewport>
            <SideNav>
              <Brand>
                <BrandName>Andrew<br />Borstein</BrandName>
                <BrandRole>Full Stack Developer</BrandRole>
              </Brand>
              {links.map((l) => (
                <SideLink key={l.label} $active={l.active} $color={l.color}>{l.icon}<span>{l.label}</span></SideLink>
              ))}
            </SideNav>
            <Page>
              <Banner>EDUCATION</Banner>
              <CardRow>
                {schools.map((s) => (
                  <Card key={s.name}>
                    <CardTitle>{s.name}</CardTitle>
                    <CardPlace>{s.place}</CardPlace>
                    <CardList>{s.items.map((t) => <li key={t}>{t}</li>)}</CardList>
                  </Card>
                ))}
              </CardRow>
              <Banner>CONTACT</Banner>
              <ContactRow>
                <MailButton><FaEnvelope size={25} /></MailButton>
                <MailLink>andrew@andrewborstein.com</MailLink>
              </ContactRow>
            </Page>
            <ScrollTrack>
              <svg width="8" height="5" viewBox="0 0 8 5"><path d="M4 0l4 4.5H0z" fill="#505050" /></svg>
              <Thumb />
              <Caret w={8} h={5} color="#505050" />
            </ScrollTrack>
          </Viewport>
        </Browser>
      </Main>
    </Desktop>
  );
}
